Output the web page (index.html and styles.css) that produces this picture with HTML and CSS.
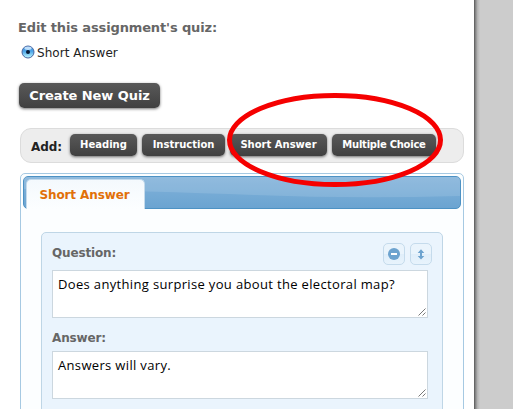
FILE: index.html
```
<!DOCTYPE html>
<html lang="en">
<head>
<meta charset="utf-8">
<title>Edit quiz</title>
<link rel="stylesheet" href="styles.css">
</head>
<body>
<main class="page">
  <h1 class="title"><span>Edit this assignment's quiz:</span></h1>
  <label class="choice">
    <svg class="radio" width="14" height="14" viewBox="0 0 14 14">
      <defs><linearGradient id="r" x2="0" y2="1"><stop offset="0" stop-color="#3c8ad8"/><stop offset=".45" stop-color="#4da6e8"/><stop offset="1" stop-color="#c3fbff"/></linearGradient></defs>
      <circle cx="7" cy="7" r="6" fill="url(#r)" stroke="#4866a0"/>
      <ellipse cx="7" cy="3.3" rx="3.6" ry="1.7" fill="#d5ebff" opacity=".85"/>
      <circle cx="7" cy="7" r="2" fill="#071b36"/>
    </svg>
    <span class="choice-text">Short Answer</span>
  </label>
  <button class="btn create"><span>Create New Quiz</span></button>
  <div class="add-bar">
    <span class="add-label">Add:</span>
    <button class="btn small heading">Heading</button>
    <button class="btn small instruction">Instruction</button>
    <button class="btn small short">Short Answer</button>
    <button class="btn small multiple">Multiple Choice</button>
    <svg class="highlight" width="220" height="98" viewBox="0 0 220 98"><ellipse cx="110" cy="49" rx="105.5" ry="44.5" fill="none" stroke="#f50000" stroke-width="5"/></svg>
  </div>
  <section class="tabs">
    <div class="tab-head">
      <svg class="wave" width="436" height="31" viewBox="0 0 436 31" preserveAspectRatio="none"><path d="M0 0H436V19Q330 22 230 18T0 12Z" fill="#fff" opacity=".12"/></svg>
      <div class="tab"><span>Short Answer</span></div>
    </div>
    <div class="card">
      <div class="card-head">
        <span class="label question">Question:</span>
        <button class="icon"><svg width="20" height="20" viewBox="0 0 20 20"><circle cx="10" cy="10" r="6" fill="#6da3cf"/><path d="M7 10h6" stroke="#fff" stroke-width="2"/></svg></button>
        <button class="icon"><svg width="20" height="20" viewBox="0 0 20 20"><path d="M10 5.300L13.300 9H11v3h2.300L10 15.500 6.700 12H9V9H6.700Z" fill="#6da3cf"/></svg></button>
      </div>
      <div class="field first"><span class="q-text">Does anything surprise you about the electoral map?</span>
        <svg class="grip" width="8" height="8" viewBox="0 0 8 8"><path d="M.5 7.500L7.500.5M4.500 7.500L7.500 4.500" stroke="#555" fill="none" stroke-width=".8"/></svg></div>
      <div class="label answer">Answer:</div>
      <div class="field"><span class="a-text">Answers will vary.</span>
        <svg class="grip" width="8" height="8" viewBox="0 0 8 8"><path d="M.5 7.500L7.500.5M4.500 7.500L7.500 4.500" stroke="#555" fill="none" stroke-width=".8"/></svg></div>
    </div>
  </section>
</main>
<div class="edge"></div>
</body>
</html>
```
FILE: styles.css
```
* { box-sizing: border-box; }
body { margin: 0; height: 409px; overflow: hidden; display: flex; background: #ccc; font-family: "DejaVu Sans", Verdana, sans-serif; }
.page { width: 474px; height: 409px; overflow: hidden; background: #fff; padding: 18px 10px 0 18px; }
.edge { width: 6px; background: linear-gradient(90deg, #555, #858585 25%, #b5b5b5 60%, #ccc); }
.title { margin: 0; font-size: 13px; line-height: 20px; color: #666; white-space: nowrap; letter-spacing: -.13px; }
.choice { display: flex; align-items: center; height: 18px; margin: 5px 0 0 3px; gap: 2px; font-size: 12px; color: #222; }
.choice-text { letter-spacing: .05px; white-space: nowrap; padding-top: 1px; }
.btn { display: flex; align-items: center; justify-content: center; border: 0; padding: 0; color: #fff; font: bold 13px "DejaVu Sans", Verdana, sans-serif; white-space: nowrap; background: linear-gradient(#595959, #404040); border-radius: 5px; box-shadow: 0 1px 3px rgba(0,0,0,.55); }
.create { width: 141px; height: 25px; margin: 22px 0 0 1px; letter-spacing: -.07px; }
.add-bar { position: relative; width: 444px; height: 35px; margin: 20px 0 0 2px; padding-left: 10px; display: flex; align-items: center; background: #ededed; border: 1px solid #dcdcdc; border-radius: 11px; }
.add-label { width: 39px; font-size: 12px; font-weight: bold; color: #222; letter-spacing: -.1px; padding-top: 2px; }
.small { height: 22px; font-size: 10px; margin: 0 5px 1px 0; padding-bottom: 1px; }
.heading { width: 67px; }
.instruction { width: 83px; }
.short { width: 97px; }
.multiple { width: 104px; margin-right: 0; letter-spacing: -.25px; }
.highlight { position: absolute; left: 204px; top: -38px; z-index: 2; }
.tabs { width: 444px; height: 260px; margin: 10px 0 0 2px; padding: 2px; border: 1px solid #a6c9e2; border-radius: 5px; background: #fcfeff; }
.tab-head { position: relative; height: 33px; padding: 2px 0 0 2px; border: 1px solid #4d92c4; border-radius: 5px; background: linear-gradient(#82b2da, #6ba4d1); }
.wave { position: absolute; left: 0; top: 0; }
.tab { position: relative; width: 119px; height: 30px; padding-right: 2px; background: linear-gradient(#f4f9fd, #fcfeff); border: 1px solid #c5dbec; border-bottom: 0; border-radius: 5px 5px 0 0; text-align: center; font-size: 12px; font-weight: bold; line-height: 31px; color: #e17009; letter-spacing: -.1px; white-space: nowrap; }
.card { width: 402px; height: 200px; margin: 23px 0 0 18px; padding: 10px 10px 0; border: 1px solid #bfd6e6; border-radius: 5px; background: #eaf4fd; }
.card-head { display: flex; height: 27px; gap: 5px; }
.label { color: #666; font: bold 12px/18px "DejaVu Sans", Verdana, sans-serif; letter-spacing: -.15px; }
.question { width: 326px; padding-top: 1px; }
.icon { width: 22px; height: 22px; padding: 0; border: 1px solid #c5dbec; border-radius: 5px; background: linear-gradient(#eaf4fc 50%, #e0eefa 52%, #e8f3fc); }
.icon svg { display: block; }
.field { position: relative; width: 376px; height: 48px; padding: 3px 5px; border: 1px solid #ccd7df; background: #fff; color: #000; font: 13px/20px "Open Sans", "Lucida Grande", sans-serif; letter-spacing: .34px; white-space: nowrap; }
.grip { position: absolute; right: 1px; bottom: 1px; }
.answer { height: 33px; padding-top: 11px; }
```
